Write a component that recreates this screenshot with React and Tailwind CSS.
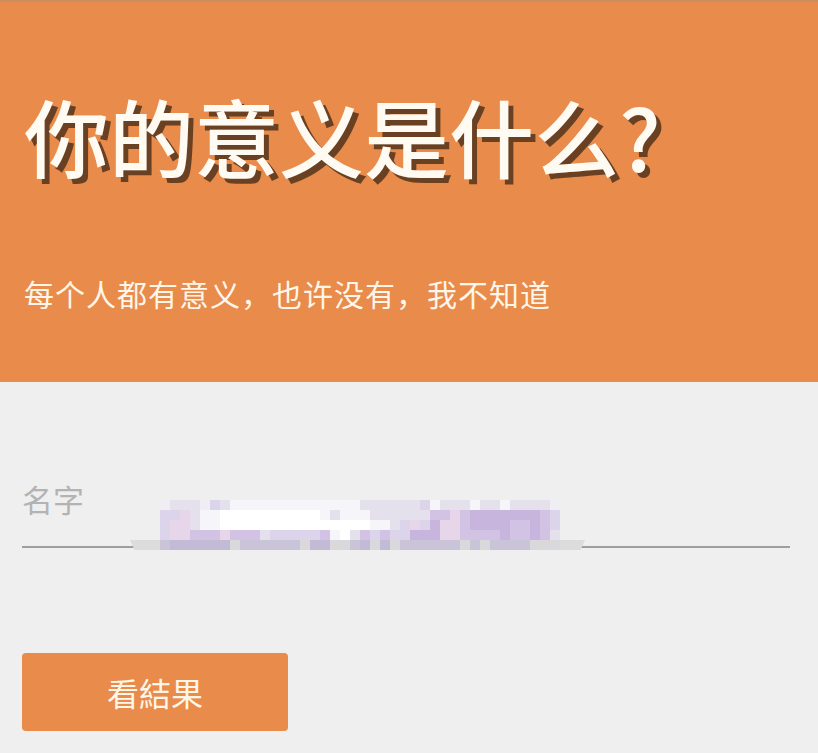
const PALETTE = {
  a: "#efeef2",
  b: "#e4e1ec",
  c: "#dcd4ea",
  d: "#d2c2e4",
  e: "#c7b5de",
  f: "#ffffff",
  g: "#f6f5f9",
  h: "#e7d5ea",
  i: "#c9c4d7",
  k: "#c3bbd5",
  j: "#d9d9dc",
};

// pixelated (blurred) name value, 40 x 5 blocks
const ROWS = [
  "abbbacbgggggggggggggbbbbbbcgbbbgbbgbbbba",
  "cchbggffffffffffgbgggbbbbbbddhdeeeeeeedc",
  "chhbggfffffffffffffffggbchcehhdeeeeddedc",
  "chhdddhdddbcccccdgfbdcdcceeehhddddeddedb",
  "ikkkkkkjiiiiiijkkjjikjkjiiiiiijijiiiijjj",
];

function Mosaic() {
  return (
    <div className="flex flex-col">
      {ROWS.map((row, r) => (
        <div key={r} className="flex">
          {row.split("").map((ch, c) => (
            <div
              key={c}
              className="w-[10px] h-[10px]"
              style={{ backgroundColor: PALETTE[ch] }}
            />
          ))}
        </div>
      ))}
    </div>
  );
}

export default function App() {
  const cjk = { fontFamily: '"Noto Sans CJK SC", "Noto Sans", sans-serif' };

  return (
    <div className="w-[818px] h-[753px] bg-[#efefef] overflow-hidden" style={cjk}>
      <header className="flex flex-col h-[382px] bg-[#e88b4b] border-t-2 border-[#c98d62] px-[24px] pt-[90px]">
        <h1 className="text-[85px] leading-none font-medium text-[#fffaf2] [text-shadow:5px_5px_0_#6a4022]">
          你的意义是什么?
        </h1>
        <p className="mt-[101px] text-[30px] leading-none tracking-[1px] text-[#fff6ea]">
          每个人都有意义，也许没有，我不知道
        </p>
      </header>

      <section className="flex flex-col items-start px-[22px] pt-[100px] gap-[105px]">
        <div className="relative self-stretch mr-[6px] flex items-start h-[66px] border-b-2 border-[#9e9e9e]">
          <span className="mt-[1px] text-[31px] leading-none text-[#b3b3b3]">名字</span>
          {/* blurred input value sits over the field */}
          <div className="absolute left-[108px] -bottom-[4px] w-[455px] h-[10px] bg-[#dcdcdc] [clip-path:polygon(0_0,100%_0,99%_100%,1%_100%)]" />
          <div className="absolute left-[138px] top-[18px]">
            <Mosaic />
          </div>
        </div>

        <button className="w-[266px] h-[78px] rounded-[4px] bg-[#e88b4b] text-[32px] text-[#fff6ea]">
          看結果
        </button>
      </section>
    </div>
  );
}
